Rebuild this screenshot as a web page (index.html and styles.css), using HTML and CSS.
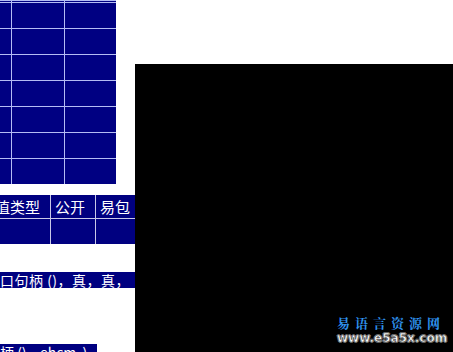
FILE: index.html
```html
<!DOCTYPE html>
<html lang="zh">
<head>
<meta charset="utf-8">
<link rel="stylesheet" href="styles.css">
</head>
<body>
<div class="page">
  <div class="left">
    <div class="grid">
      <div class="c"></div><div class="c"></div><div class="c"></div>
      <div class="c"></div><div class="c"></div><div class="c"></div>
      <div class="c"></div><div class="c"></div><div class="c"></div>
      <div class="c"></div><div class="c"></div><div class="c"></div>
      <div class="c"></div><div class="c"></div><div class="c"></div>
      <div class="c"></div><div class="c"></div><div class="c"></div>
      <div class="c"></div><div class="c"></div><div class="c"></div>
      <div class="c"></div><div class="c"></div><div class="c"></div>
    </div>
    <div class="table">
      <div class="th first"><span>值类型</span></div>
      <div class="th">公开</div>
      <div class="th">易包</div>
      <div class="td"></div>
      <div class="td"></div>
      <div class="td"></div>
    </div>
    <div class="bar">口句柄 ()，真，真，</div>
    <div class="bar2"><span class="sel">柄 ()&nbsp; . ehcm&nbsp; )</span></div>
  </div>
  <div class="right">
    <div class="black">
      <div class="mark">
        <div class="mark-cn">易语言资源网</div>
        <div class="mark-en">www.e5a5x.com</div>
      </div>
    </div>
  </div>
</div>
</body>
</html>
```

FILE: styles.css
```css
html, body {
  margin: 0;
  padding: 0;
  background: #ffffff;
}
.page {
  width: 453px;
  height: 352px;
  overflow: hidden;
  display: flex;
  font-family: "Noto Sans CJK SC", "DejaVu Sans", sans-serif;
}
.left {
  width: 135px;
  flex: none;
  display: flex;
  flex-direction: column;
}
.grid {
  width: 116px;
  display: grid;
  grid-template-columns: 11px 52px 51px;
  grid-template-rows: 1px repeat(7, 25px);
  row-gap: 1px;
  column-gap: 1px;
  padding-top: 1px;
  background: #b4bcf4;
  margin-bottom: 11px;
}
.c {
  background: #000082;
}
.table {
  display: grid;
  grid-template-columns: 50px 44px 40px;
  grid-template-rows: 23px 25px;
  column-gap: 1px;
  row-gap: 1px;
  background: #c8c8e8;
  width: 135px;
}
.th, .td {
  background: #000080;
  color: #ffffff;
  font-size: 15px;
  line-height: 23px;
  padding-left: 4px;
  overflow: hidden;
  white-space: nowrap;
}
.th.first {
  padding-left: 0;
}
.th.first span {
  margin-left: -5px;
}
.bar {
  margin-top: 28px;
  height: 16px;
  background: #000080;
  color: #ffffff;
  font-size: 14px;
  line-height: 16px;
  letter-spacing: 0.5px;
  white-space: nowrap;
  overflow: hidden;
}
.bar2 {
  margin-top: 53px;
  height: 8px;
  overflow: visible;
  white-space: nowrap;
}
.sel {
  display: inline-block;
  width: 97px;
  height: 16px;
  background: #000080;
  color: #ffffff;
  font-size: 14px;
  line-height: 17px;
  overflow: hidden;
}
.right {
  flex: 1;
  padding-top: 64px;
  display: flex;
}
.black {
  flex: 1;
  background: #000000;
  position: relative;
}
.mark {
  position: absolute;
  left: 202px;
  top: 251px;
  width: 114px;
}
.mark-cn {
  color: #2f92ee;
  font-family: "Noto Serif CJK SC", "Noto Sans CJK SC", serif;
  font-size: 13px;
  line-height: 15px;
  letter-spacing: 5px;
  font-weight: bold;
}
.mark-en {
  margin-top: 2px;
  color: #ffffff;
  font-family: "DejaVu Sans", sans-serif;
  font-weight: bold;
  font-size: 12px;
  line-height: 13px;
  -webkit-text-stroke: 0.6px #555555;
  text-shadow: 1px 0 0 #666, -1px 0 0 #666, 0 1px 0 #666, 0 -1px 0 #666;
}
```
